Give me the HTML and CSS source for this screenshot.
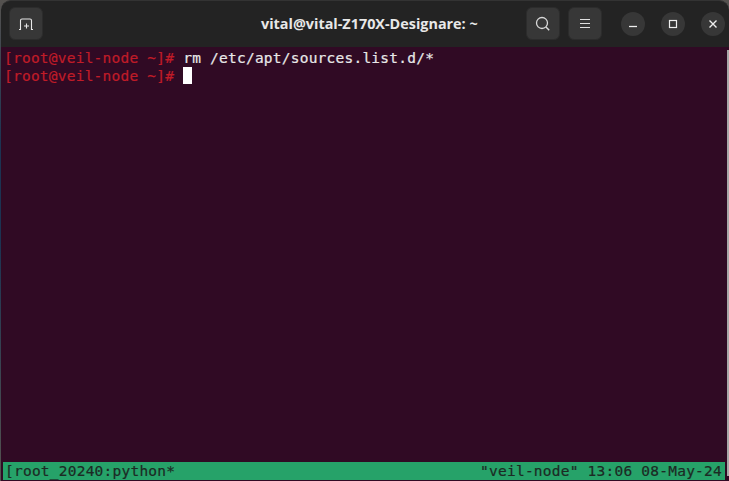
FILE: index.html
```html
<!DOCTYPE html>
<html lang="en">
<head>
<meta charset="utf-8">
<title>Terminal</title>
<link rel="stylesheet" href="styles.css">
</head>
<body>
<div class="window">
  <header class="titlebar">
    <div class="group">
      <button class="tool"><svg width="16" height="16" viewBox="0 0 16 16"><path d="M1 13.5h1.5V4.5q0-1.5 1.5-1.5h8q1.5 0 1.5 1.5v9H15M8.5 7.5v5M6 10h5" fill="none" stroke="#e8e8e8" stroke-width="1.1"/></svg></button>
    </div>
    <div class="title">vital@vital-Z170X-Designare: ~</div>
    <div class="group right">
      <button class="tool"><svg width="16" height="16" viewBox="0 0 16 16"><circle cx="7" cy="7" r="5.5" fill="none" stroke="#d8d8d8" stroke-width="1.3"/><path d="M11 11l3.2 3.2" stroke="#d8d8d8" stroke-width="1.5"/></svg></button>
      <button class="tool"><svg width="16" height="16" viewBox="0 0 16 16"><path d="M3 3.5h10M3 7.5h10M3 11.5h10" stroke="#e0e0e0" stroke-width="1.1"/></svg></button>
      <div class="winbtns">
        <button class="round"><svg width="16" height="16" viewBox="0 0 16 16"><path d="M4 10.5h8" stroke="#eee" stroke-width="1.3"/></svg></button>
        <button class="round"><svg width="16" height="16" viewBox="0 0 16 16"><rect x="4.5" y="4.5" width="7" height="7" fill="none" stroke="#eee" stroke-width="1.2"/></svg></button>
        <button class="round"><svg width="16" height="16" viewBox="0 0 16 16"><path d="M4.5 4.5l7 7M11.5 4.5l-7 7" stroke="#eee" stroke-width="1.4"/></svg></button>
      </div>
    </div>
  </header>
  <main class="term">
    <div class="lines">
      <div class="line"><span class="prompt">[root@veil-node ~]#</span> <span class="cmd">rm /etc/apt/sources.list.d/*</span></div>
      <div class="line"><span class="prompt">[root@veil-node ~]#</span> <span class="cursor"></span></div>
    </div>
    <div class="status"><span>[root_20240:python*</span><span>"veil-node" 13:06 08-May-24</span></div>
    <div class="thumb"></div>
  </main>
</div>
</body>
</html>
```
FILE: styles.css
```css
* { box-sizing: border-box; }
html, body { margin: 0; height: 100%; background: #3a3a3a; overflow: hidden; }
.window { width: 729px; height: 481px; display: flex; flex-direction: column; padding-left: 1px; background: linear-gradient(#55524f, #1c3352 30%, #1c3352 50%, #55524f); }
.titlebar { height: 47px; flex: none; display: flex; align-items: center; justify-content: space-between; position: relative; background: #232323; border-top: 1px solid #333; border-radius: 10px 10px 0 0; padding: 0 4px 1px 8px; }
.group { display: flex; align-items: center; }
.right { gap: 8px; }
.tool { width: 34px; height: 33px; padding: 0; border: 1px solid #2c2c2c; border-radius: 6px; background: #373737; display: flex; align-items: center; justify-content: center; }
.winbtns { display: flex; gap: 16px; margin-left: 11px; }
.round { width: 24px; height: 24px; padding: 0; border: 0; border-radius: 50%; background: #373737; display: flex; align-items: center; justify-content: center; }
.title { position: absolute; left: 260px; top: 14px; font: 700 14.4px/18px "Open Sans", "Noto Sans", sans-serif; color: #e8e8e8; white-space: nowrap; }
.term { flex: 1; position: relative; display: flex; flex-direction: column; justify-content: space-between; background: #300a24; padding: 2px 0 0 3px; font: 14.5px/18px "DejaVu Sans Mono", monospace; letter-spacing: 0.23px; -webkit-text-stroke: 0.2px; }
.line { height: 18px; white-space: pre; }
.prompt { color: #c01c28; }
.cmd { color: #e8e8e8; }
.cursor { display: inline-block; width: 9px; height: 17px; background: #fff; vertical-align: top; }
.status { height: 18px; margin: 0 4px 1px -1px; display: flex; justify-content: space-between; padding: 0 3px 0 2px; background: #26a269; color: #1c2a24; white-space: pre; }
.thumb { position: absolute; right: 0; top: 3px; bottom: 5px; width: 2px; background: #a8a8a8; }
```
